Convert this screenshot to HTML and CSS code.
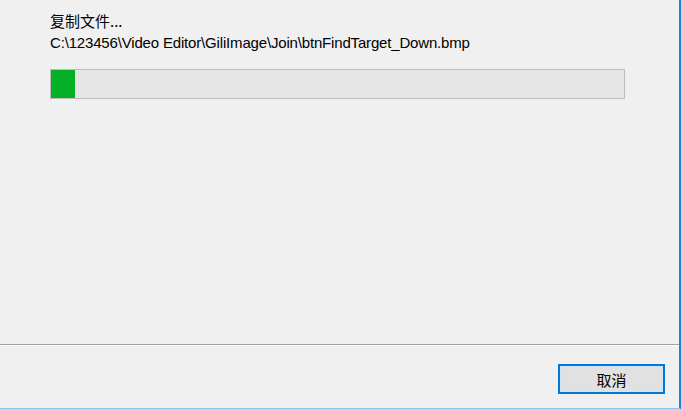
FILE: index.html
```html
<!DOCTYPE html>
<html lang="zh-CN">
<head>
<meta charset="utf-8">
<link rel="stylesheet" href="styles.css">
</head>
<body>
<div class="dialog">
  <div class="content">
    <div class="title">复制文件...</div>
    <div class="path">C:\123456\Video Editor\GiliImage\Join\btnFindTarget_Down.bmp</div>
    <div class="progress"><div class="fill" style="width:24px"></div></div>
  </div>
  <div class="separator"></div>
  <div class="footer">
    <button class="btn">取消</button>
  </div>
</div>
</body>
</html>
```
FILE: styles.css
```css
html, body {
  margin: 0;
  padding: 0;
  background: #f0f0f0;
}
.dialog {
  width: 679px;
  height: 408px;
  background: #f0f0f0;
  border-right: 2px solid #1883d7;
  border-bottom: 1px solid #8cc3ec;
  display: flex;
  flex-direction: column;
}
.content {
  flex: 1;
  padding: 11px 0 0 50px;
}
.title {
  font-family: "Noto Sans CJK SC", "Liberation Sans", sans-serif;
  font-size: 15px;
  line-height: 20px;
  color: #000;
}
.path {
  font-family: "Liberation Sans", Arial, sans-serif;
  font-size: 15px;
  letter-spacing: -0.17px;
  line-height: 18px;
  color: #000;
  margin-top: 3px;
}
.progress {
  margin-top: 17px;
  width: 573px;
  height: 28px;
  background: #e6e6e6;
  border: 1px solid #bcbcbc;
  display: flex;
}
.fill {
  background: #06b025;
  height: 100%;
}
.separator {
  height: 1px;
  background: #a0a0a0;
  border-bottom: 1px solid #ffffff;
}
.footer {
  height: 62px;
  display: flex;
  justify-content: flex-end;
  align-items: flex-start;
  padding: 18px 14px 0 0;
  box-sizing: border-box;
}
.btn {
  width: 107px;
  height: 30px;
  background: #e1e1e1;
  border: 2px solid #0078d7;
  box-shadow: inset 0 0 0 1px #cfe4f7;
  font-family: "Noto Sans CJK SC", sans-serif;
  font-size: 15px;
  color: #000;
  padding: 0;
  display: flex;
  align-items: center;
  justify-content: center;
}
```
